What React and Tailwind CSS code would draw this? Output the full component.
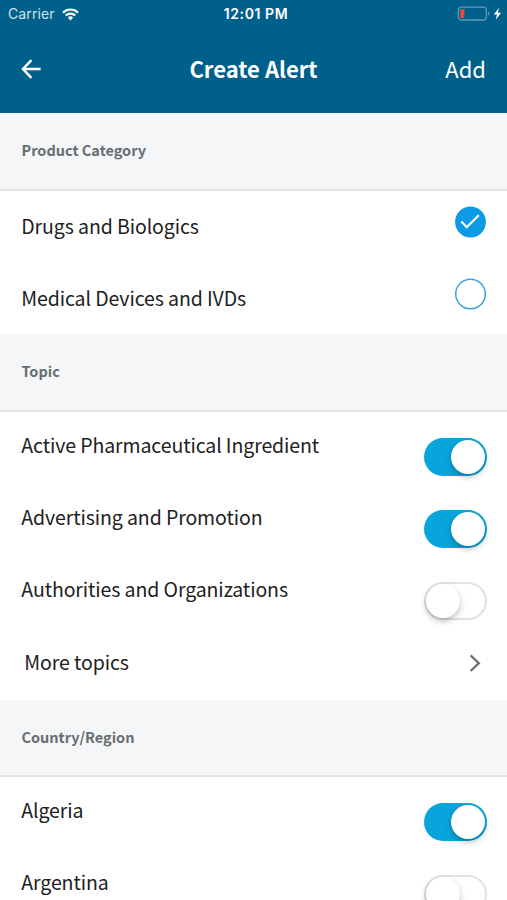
import React from "react";

function StatusBar() {
  return (
    <div className="grid h-7 grid-cols-3 items-center pr-[5px] pl-2 font-['Inter','Liberation_Sans',sans-serif] text-[14px] leading-7">
      <div className="flex items-center gap-[7px]">
        <span className="tracking-[0.1px] text-[#cfe2ec]">Carrier</span>
        <svg width="17" height="13" viewBox="0 0 17 13" fill="none" stroke="white" strokeWidth="2.2">
          <path d="M1 4.6a10.6 10.6 0 0 1 15 0" />
          <path d="M3.8 7.6a6.6 6.6 0 0 1 9.4 0" />
          <path d="M5.9 9.6a3.7 3.7 0 0 1 5.2 0L8.5 12.4Z" fill="white" stroke="none" />
        </svg>
      </div>
      <span className="pl-0.5 text-center font-semibold tracking-[0.6px] whitespace-nowrap">12:01 PM</span>
      <div className="flex items-center justify-end">
        <svg width="45" height="16" viewBox="0 0 45 16" fill="none">
          <rect x="1.4" y="1.2" width="28" height="12.8" rx="3" stroke="#6397b3" strokeWidth="1.3" />
          <rect x="3.4" y="3.2" width="4" height="8.8" rx="1" fill="#f0453c" />
          <path d="M31.2 5.4a2.4 2.4 0 0 1 0 4.4Z" fill="#6397b3" />
          <path d="M42 1.8 36.8 8.6h3.2L38.8 13.8l5.4-7h-3.3Z" fill="white" />
        </svg>
      </div>
    </div>
  );
}

function SectionHeader({ title, className }) {
  return (
    <h2 className={`border-b-[2.5px] border-[#e1e3e4] bg-[#f4f6f8] pt-[25px] pl-[21.5px] text-[14.5px] leading-6 font-bold text-[#666e71] ${className}`}>
      {title}
    </h2>
  );
}

function Check({ on }) {
  return (
    <svg className="mt-[15px] shrink-0" width="32" height="32" viewBox="0 0 32 32" fill="none">
      <circle cx="15.5" cy="16" r={on ? 15.4 : 14.8} fill={on ? "#0c99e6" : "white"} stroke={on ? "none" : "#3da3dc"} strokeWidth="1.5" />
      {on && <path d="M6.4 15.6 11.7 21.2 23.8 9.3" stroke="white" strokeWidth="2.2" />}
    </svg>
  );
}

function Toggle({ on }) {
  return (
    <div className={`mt-[26px] flex h-[38px] w-[63px] shrink-0 items-center rounded-full ${on ? "justify-end bg-[#08a5dc] pr-[2px]" : "border-2 border-[#e2e2e2] bg-white"}`}>
      <div className="h-[34px] w-[34px] rounded-full bg-white shadow-[0_3px_6px_rgba(0,0,0,0.25)]" />
    </div>
  );
}

function Row({ label, children, className }) {
  return (
    <div className="flex h-[72px] items-start justify-between pr-5 pl-[21.3px]">
      <span className={`text-[19.5px] leading-7 tracking-[-0.1px] whitespace-nowrap text-[#212121] ${className}`}>{label}</span>
      {children}
    </div>
  );
}

export default function App() {
  return (
    <div className="h-[900px] w-full overflow-hidden bg-white font-['Noto_Sans_CJK_SC',sans-serif]">
      <header className="h-[113px] bg-[#00608c] text-white">
        <StatusBar />
        <div className="grid h-[82px] grid-cols-3 items-center px-[21px]">
          <svg width="20" height="20" viewBox="0 0 20 20" fill="none" stroke="white" strokeWidth="2.5">
            <path d="M19.6 10H2M10.4 1.2 2 10l8.4 8.8" />
          </svg>
          <h1 className="pb-0.5 text-center text-[22px] font-bold whitespace-nowrap">Create Alert</h1>
          <span className="pb-0.5 text-right text-[22px]">Add</span>
        </div>
      </header>

      <SectionHeader title="Product Category" className="h-[78px]" />
      <div className="h-[143px]">
        <Row label="Drugs and Biologics" className="mt-[21px]"><Check on /></Row>
        <Row label="Medical Devices and IVDs" className="mt-[21px]"><Check /></Row>
      </div>

      <SectionHeader title="Topic" className="h-[78px]" />
      <div className="h-[288px]">
        <Row label="Active Pharmaceutical Ingredient" className="mt-[19px]"><Toggle on /></Row>
        <Row label="Advertising and Promotion" className="mt-[19px]"><Toggle on /></Row>
        <Row label="Authorities and Organizations" className="mt-[19px]"><Toggle /></Row>
        <Row label="More topics" className="mt-5 ml-[3px]">
          <svg className="mt-[26px] mr-1" width="14" height="18" viewBox="0 0 14 18" fill="none" stroke="#6f7375" strokeWidth="2.4">
            <path d="M1.6 1.4 9.8 9.2 1.6 17" />
          </svg>
        </Row>
      </div>

      <SectionHeader title="Country/Region" className="h-[77px]" />
      <Row label="Algeria" className="mt-[19px]"><Toggle on /></Row>
      <Row label="Argentina" className="mt-[19px]"><Toggle /></Row>
    </div>
  );
}
